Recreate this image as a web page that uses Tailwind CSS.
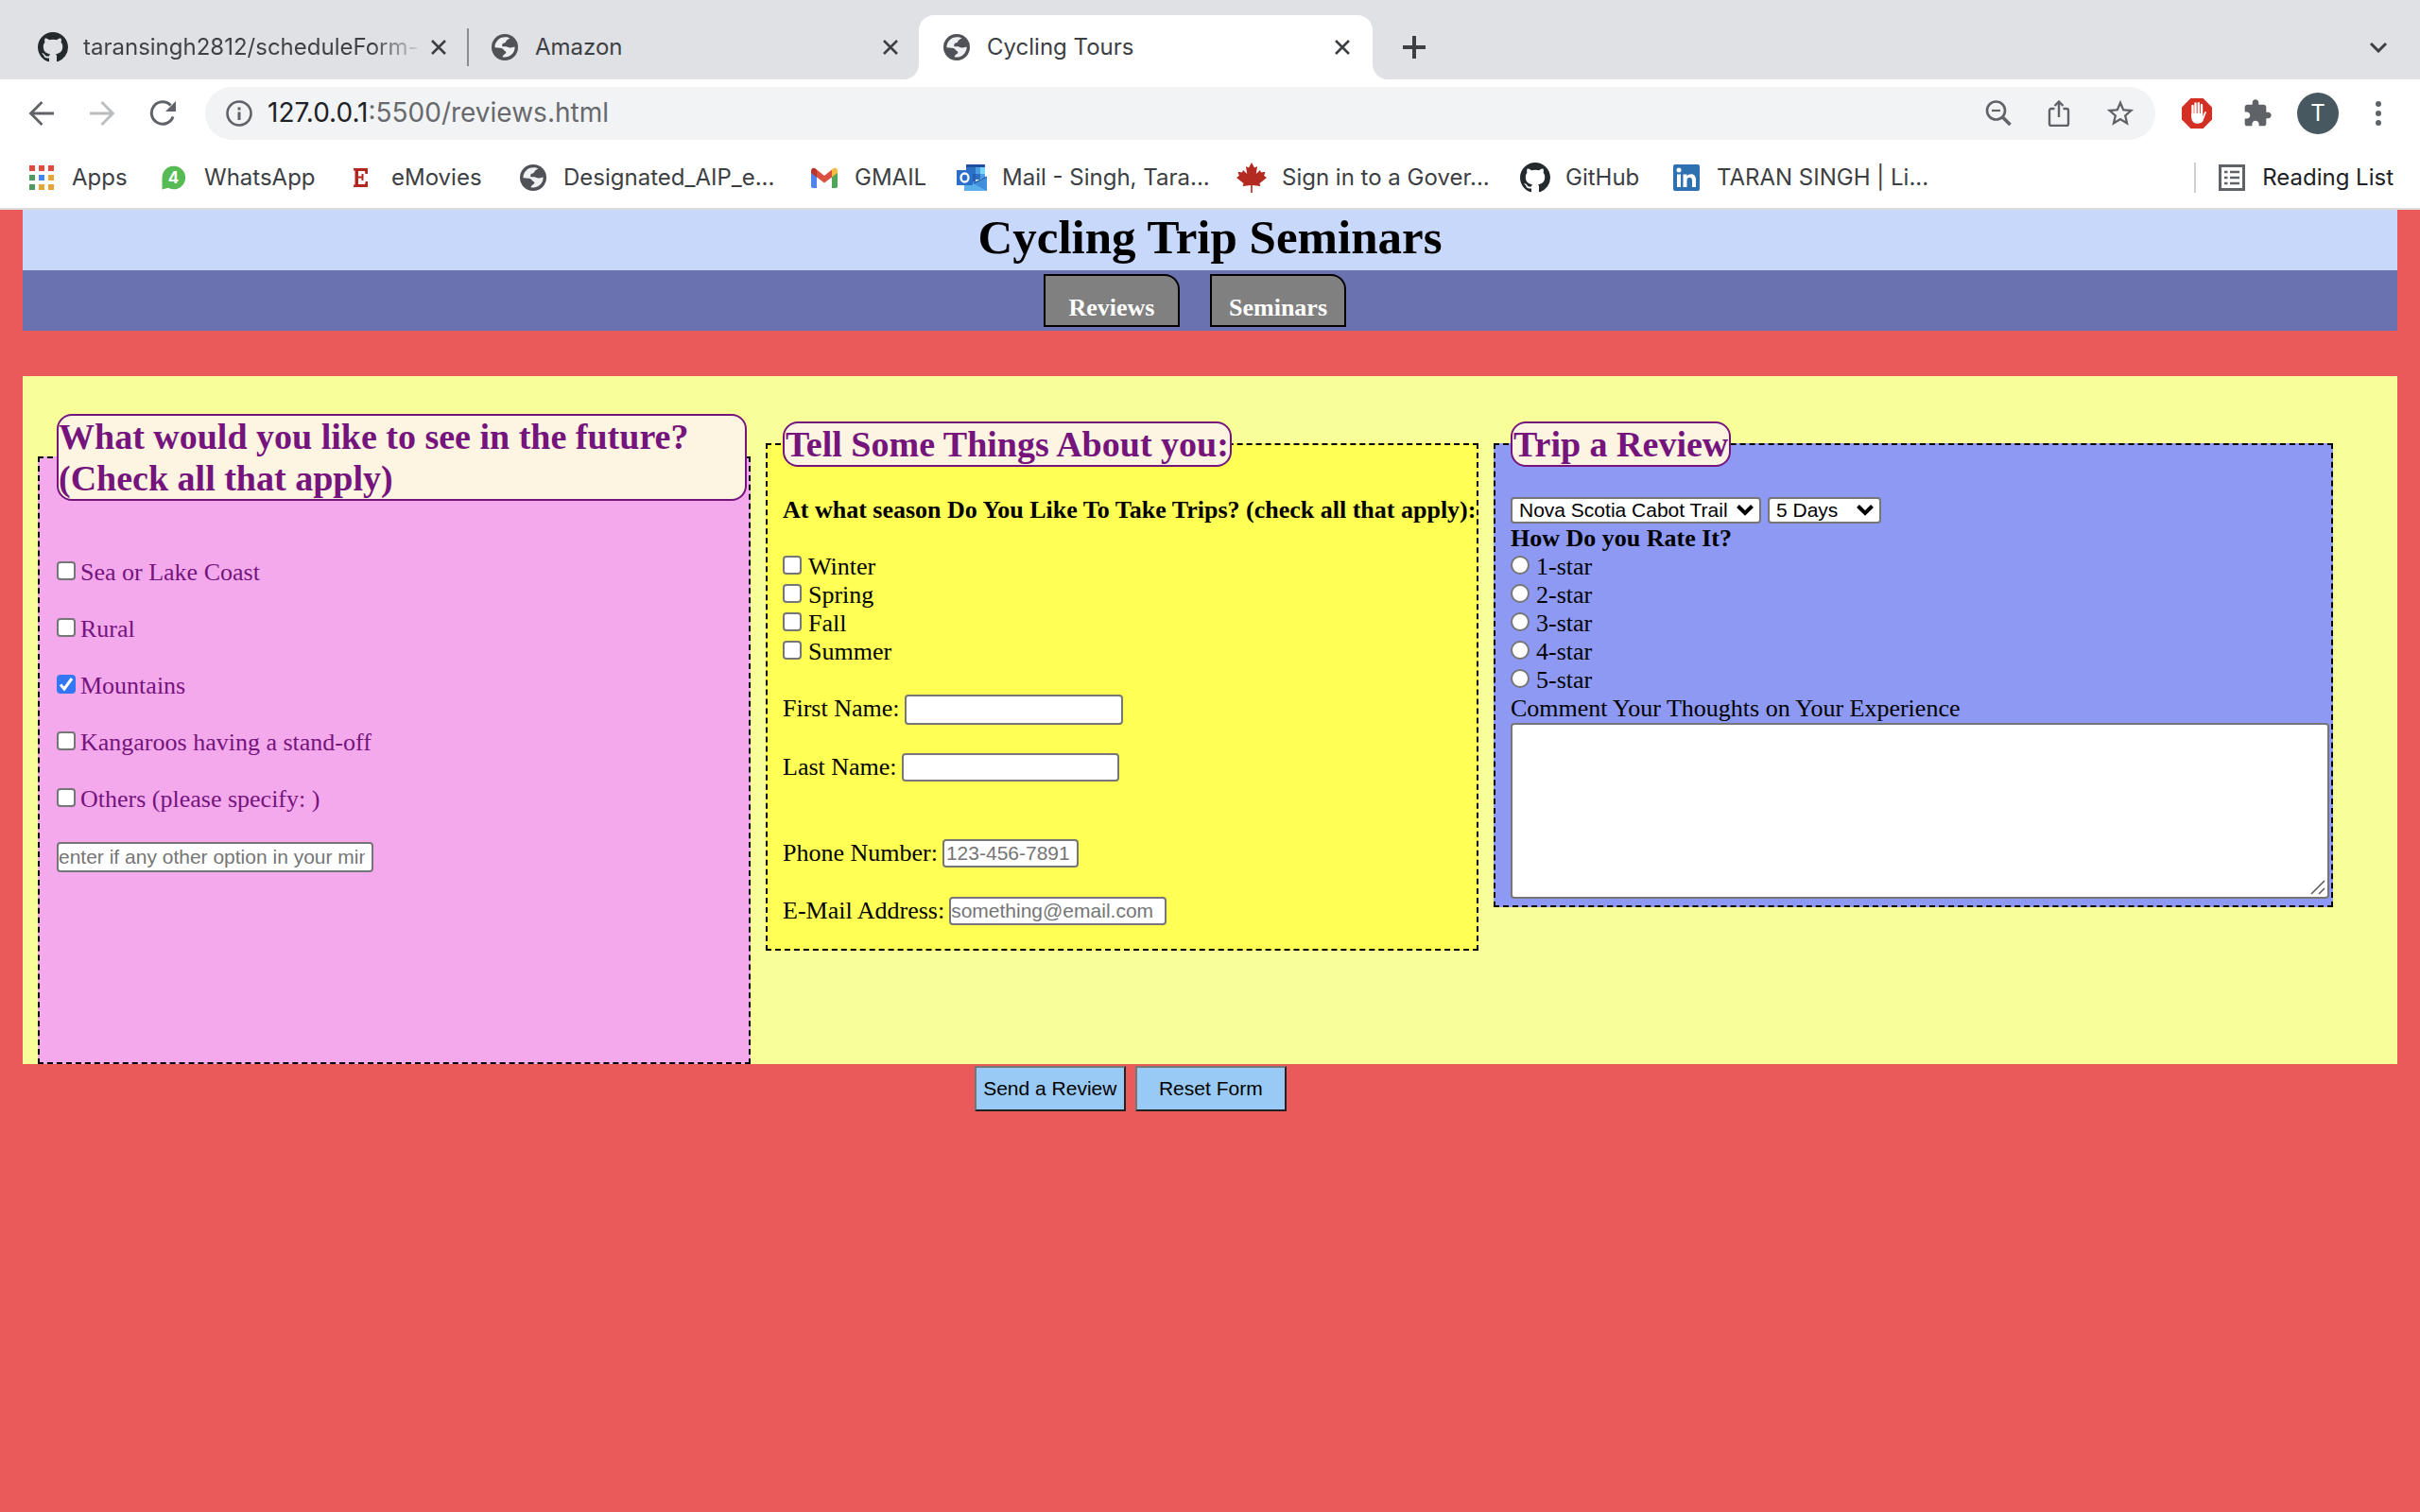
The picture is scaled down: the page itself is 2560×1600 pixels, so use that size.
<!DOCTYPE html>
<html lang="en">
<head>
<meta charset="utf-8">
<title>Cycling Tours</title>
<script src="https://cdn.jsdelivr.net/npm/@tailwindcss/browser@4"></script>
</head>
<body class="min-h-screen bg-[#eb5a5a] text-black">

<svg class="hidden" aria-hidden="true">
  <symbol id="github" viewBox="0 0 16 16"><path fill="#24292e" d="M8 0C3.58 0 0 3.58 0 8c0 3.54 2.29 6.53 5.47 7.59.4.07.55-.17.55-.38 0-.19-.01-.82-.01-1.49-2.01.37-2.53-.49-2.69-.94-.09-.23-.48-.94-.82-1.13-.28-.15-.68-.52-.01-.53.63-.01 1.08.58 1.23.82.72 1.21 1.87.87 2.33.66.07-.52.28-.87.51-1.07-1.78-.2-3.64-.89-3.64-3.95 0-.87.31-1.59.82-2.15-.08-.2-.36-1.02.08-2.12 0 0 .67-.21 2.2.82.64-.18 1.32-.27 2-.27s1.36.09 2 .27c1.53-1.04 2.2-.82 2.2-.82.44 1.1.16 1.92.08 2.12.51.56.82 1.27.82 2.15 0 3.07-1.87 3.75-3.65 3.95.29.25.54.73.54 1.48 0 1.07-.01 1.93-.01 2.2 0 .21.15.46.55.38A8.01 8.01 0 0 0 16 8c0-4.42-3.58-8-8-8z"/></symbol>
  <symbol id="globe" viewBox="0 0 28 28"><circle cx="14" cy="14" r="14" fill="#505257"/><path fill="#eef0f2" d="M19.500 4.200C17 3 13 2.600 10 4.100C6 6 3.300 10 3.500 14.200L9 14.800C11 15 12.500 16 13.500 17.500C15 18.500 16 19 15 20.500C13.500 21.500 12 22 11.500 24.300C15 25.200 19.500 24 22.300 20.500C24.300 18 24.800 15.500 24.500 13.500L20.500 14.500C18 15 17 13.500 15.500 13.300L11.500 13.200C10.500 11 12 9.500 14 9.200C15.500 9 15 7 16.500 6.300Z"/></symbol>
  <symbol id="close" viewBox="0 0 18 18"><path d="M2 2l14 14M16 2L2 16" stroke="#3c4043" stroke-width="2.600" fill="none"/></symbol>
</svg>

<header class="bg-white font-[Inter,Roboto,sans-serif] text-2xl text-[#3c4043]">
  <!-- tab strip -->
  <div class="flex h-[84px] bg-[#dfe1e5] pt-4">
    <div class="flex h-[68px] w-[496px] shrink-0 items-center pl-10">
      <svg class="size-8 shrink-0"><use href="#github"/></svg>
      <span class="ml-4 w-[360px] shrink-0 bg-gradient-to-r from-[#3c4043] from-85% to-transparent bg-clip-text whitespace-nowrap text-transparent">taransingh2812/scheduleForm-</span>
      <button aria-label="Close tab" class="ml-[7px]"><svg class="size-[18px]"><use href="#close"/></svg></button>
      <span class="ml-auto h-10 w-0.5 bg-[#8a8d91]"></span>
    </div>
    <div class="flex h-[68px] w-[476px] shrink-0 items-center justify-between pr-[21px] pl-6">
      <span class="flex items-center gap-[18px]"><svg class="size-7"><use href="#globe"/></svg>Amazon</span>
      <button aria-label="Close tab"><svg class="size-[18px]"><use href="#close"/></svg></button>
    </div>
    <div class="relative flex h-[68px] w-[480px] shrink-0 items-center justify-between rounded-t-2xl bg-white pr-[23px] pl-[26px]">
      <svg class="absolute bottom-0 -left-4 size-4" viewBox="0 0 16 16"><path d="M16 0v16H0A16 16 0 0 0 16 0z" fill="#fff"/></svg>
      <svg class="absolute -right-4 bottom-0 size-4" viewBox="0 0 16 16"><path d="M0 0v16h16A16 16 0 0 1 0 0z" fill="#fff"/></svg>
      <span class="flex items-center gap-[18px]"><svg class="size-7"><use href="#globe"/></svg>Cycling Tours</span>
      <button aria-label="Close tab"><svg class="size-[18px]"><use href="#close"/></svg></button>
    </div>
    <button aria-label="New tab" class="ml-8 h-[68px]"><svg class="size-6" viewBox="0 0 24 24"><path d="M12 0v24M0 12h24" stroke="#3c4043" stroke-width="4"/></svg></button>
    <button aria-label="Search tabs" class="mr-[34px] ml-auto h-[68px]"><svg class="h-3 w-5" viewBox="0 0 20 12"><path d="M2 2l8 8 8-8" stroke="#3c4043" stroke-width="3" fill="none"/></svg></button>
  </div>

  <!-- toolbar -->
  <div class="flex h-[72px] items-center pr-[29px] pl-[30px]">
    <button aria-label="Back"><svg class="size-7" viewBox="0 0 28 28"><path d="M27 14H3M14.500 2L2.500 14l12 12" stroke="#5f6368" stroke-width="2.800" fill="none"/></svg></button>
    <button aria-label="Forward" class="ml-9"><svg class="size-7" viewBox="0 0 28 28"><path d="M1 14h24M13.500 2l12 12-12 12" stroke="#babcbe" stroke-width="2.800" fill="none"/></svg></button>
    <button aria-label="Reload" class="ml-9"><svg class="size-7" viewBox="0 0 28 28"><path d="M25 17.500A11.700 11.700 0 1 1 22.500 5.500" stroke="#5f6368" stroke-width="3" fill="none"/><path d="M28 1v11H17z" fill="#5f6368"/></svg></button>
    <div class="ml-[31px] flex h-14 flex-1 items-center rounded-full bg-[#f1f3f5] pr-5 pl-[22px]">
      <svg class="size-7" viewBox="0 0 28 28"><circle cx="14" cy="14" r="12.500" stroke="#5f6368" stroke-width="2.600" fill="none"/><path d="M14 12.500V21M14 7.500v3" stroke="#5f6368" stroke-width="3"/></svg>
      <span class="ml-4 flex-1 text-[28px] text-[#67696c]"><span class="text-[#202124]">127.0.0.1</span>:5500/reviews.html</span>
      <button aria-label="Zoom"><svg class="size-7" viewBox="0 0 28 28"><circle cx="11.500" cy="11" r="9.500" stroke="#5f6368" stroke-width="2.600" fill="none"/><path d="M7 11h9" stroke="#5f6368" stroke-width="2.200"/><path d="M18 17.500l8.500 8.500" stroke="#5f6368" stroke-width="3.600"/></svg></button>
      <button aria-label="Share" class="ml-9"><svg class="size-7" viewBox="0 0 28 28"><path d="M9.500 9H6a2 2 0 0 0-2 2v14a2 2 0 0 0 2 2h16a2 2 0 0 0 2-2V11a2 2 0 0 0-2-2h-3.500M14 18V2M9.500 6L14 1.500 18.500 6" stroke="#5f6368" stroke-width="2.400" fill="none"/></svg></button>
      <button aria-label="Bookmark" class="ml-[34px]"><svg class="size-[34px]" viewBox="0 0 24 24"><path fill="#5f6368" d="M22 9.240l-7.190-.620L12 2 9.190 8.630 2 9.240l5.460 4.730L5.820 21 12 17.270 18.180 21l-1.630-7.030L22 9.240zM12 15.400l-3.760 2.270 1-4.280-3.320-2.880 4.380-.380L12 6.100l1.710 4.040 4.380.380-3.320 2.880 1 4.280L12 15.400z"/></svg></button>
    </div>
    <button aria-label="Ad blocker" class="ml-7"><svg class="size-8" viewBox="0 0 32 32"><path d="M9.400 0h13.200L32 9.400v13.200L22.600 32H9.400L0 22.600V9.400z" fill="#d32f23"/><path d="M11.500 8v12M14.500 5.500V18M17.800 5.200V18M21 7v12" stroke="#fff" stroke-width="2.400" stroke-linecap="round"/><path d="M10.300 16h11.900v3.500l2-5c.8-1.200 2-.5 1.600.7l-3.500 9c-1.500 3-11 4.500-12-3z" fill="#fff"/></svg></button>
    <button aria-label="Extensions" class="ml-8"><svg class="size-8" viewBox="0 0 24 24"><path fill="#5f6368" d="M20.500 11H19V7c0-1.100-.9-2-2-2h-4V3.500C13 2.120 11.880 1 10.500 1S8 2.120 8 3.500V5H4c-1.100 0-1.990.9-1.990 2v3.800H3.500c1.490 0 2.700 1.210 2.700 2.700s-1.210 2.700-2.700 2.700H2V20c0 1.100.9 2 2 2h3.800v-1.500c0-1.490 1.210-2.700 2.700-2.700 1.490 0 2.700 1.210 2.700 2.700V22H17c1.100 0 2-.9 2-2v-4h1.500c1.380 0 2.500-1.120 2.500-2.500S21.880 11 20.500 11z"/></svg></button>
    <button aria-label="Profile" class="ml-[26px] size-11 rounded-full bg-[#475861] text-white">T</button>
    <button aria-label="Menu" class="ml-[27px]"><svg class="h-[26px] w-[30px]" viewBox="0 0 30 26"><g fill="#5f6368"><circle cx="15" cy="3" r="3"/><circle cx="15" cy="13" r="3"/><circle cx="15" cy="23" r="3"/></g></svg></button>
  </div>

  <!-- bookmarks -->
  <nav class="flex h-[66px] items-center border-b-2 border-[#dcdcdc] pr-7 pl-7 whitespace-nowrap">
    <a href="#" class="flex w-[140px] shrink-0 items-center gap-4"><svg class="size-8" viewBox="0 0 32 32"><path fill="#e24a3b" d="M3 3h6v6H3zM13 3h6v6h-6zM23 3h6v6h-6z"/><path fill="#4f9b5d" d="M3 13h6v6H3zM3 23h6v6H3z"/><path fill="#4285f4" d="M13 13h6v6h-6z"/><path fill="#e5a536" d="M23 13h6v6h-6zM13 23h6v6h-6zM23 23h6v6h-6z"/></svg>Apps</a>
    <a href="#" class="flex w-[198px] shrink-0 items-center gap-4"><svg class="size-8" viewBox="0 0 32 32"><path d="M3.500 28.500V16a12.300 12.300 0 1 1 6.500 10.800z" fill="#57bb55"/><text x="15.500" y="22" text-anchor="middle" font-size="17" font-weight="700" fill="#fff" font-family="Inter">4</text></svg>WhatsApp</a>
    <a href="#" class="flex w-[182px] shrink-0 items-center gap-4"><svg class="size-8" viewBox="0 0 32 32"><path d="M8 6h15v6h-2.500l-.7-3H13v5.500h3.500V12h2v7h-2v-2.500H13V23h7l.8-3H23v6H8v-2.500h1.500v-15H8z" fill="#b3261e"/></svg>eMovies</a>
    <a href="#" class="flex w-[308px] shrink-0 items-center gap-4"><svg class="size-8 p-0.5"><use href="#globe"/></svg>Designated_AIP_e...</a>
    <a href="#" class="flex w-[156px] shrink-0 items-center gap-4"><svg class="size-8" viewBox="0 0 32 32"><path d="M2 10l6 4.500V27H4a2 2 0 0 1-2-2z" fill="#4f83f0"/><path d="M30 10l-6 4.500V27h4a2 2 0 0 0 2-2z" fill="#4fa558"/><path d="M24 7.500l1.500-1.300C28 4.800 30 6.500 30 8.500V11l-6 4.500z" fill="#f2bd42"/><path d="M8 7.500L16 14l8-6.500v8L16 21.500 8 15.500z" fill="#d9503f"/><path d="M2 11V8.500c0-2 2-3.700 4.500-2.300L8 7.500v8z" fill="#b8352a"/></svg>GMAIL</a>
    <a href="#" class="flex w-[296px] shrink-0 items-center gap-4"><svg class="size-8" viewBox="0 0 32 32"><path d="M10 2h20v5H10z" fill="#1f4e9e"/><path d="M10 5h10v7H10z" fill="#2c6fc4"/><path d="M20 5h5v7h-5z" fill="#4ba0e4"/><path d="M25 5h5v7h-5z" fill="#79d6f9"/><path d="M10 12h10v8H10z" fill="#2460b0"/><path d="M20 12h5v6h-5z" fill="#2c6fc4"/><path d="M25 12h5v5h-5z" fill="#4ba0e4"/><path d="M8 20h12l12-5v15H8z" fill="#3f8fdb"/><path d="M8 17l24 13H8z" fill="#5aaeea"/><path d="M18 22l14-7" stroke="#1f4e9e" stroke-width="1"/><path d="M0 8h17v16H0z" fill="#2b6fcb"/><ellipse cx="8.500" cy="16" rx="4" ry="4.500" fill="none" stroke="#fff" stroke-width="2.300"/></svg>Mail - Singh, Tara...</a>
    <a href="#" class="flex w-[300px] shrink-0 items-center gap-4"><svg class="size-8" viewBox="0 0 32 32"><path d="M16 0l3 5.500 3-1.500-1.200 8L25 8l1 2.500 4.500-.7-1.300 4.200L32 16l-7.500 6 .8 3-8.500-1V32h-1.600v-8l-8.500 1 .8-3L0 16l2.800-2L1.500 9.800l4.500.7L7 8l4.200 4L10 4l3 1.500z" fill="#b32a20"/></svg>Sign in to a Gover...</a>
    <a href="#" class="flex w-[160px] shrink-0 items-center gap-4"><svg class="size-8"><use href="#github"/></svg>GitHub</a>
    <a href="#" class="flex shrink-0 items-center gap-4"><svg class="size-8" viewBox="0 0 32 32"><rect x="2" y="2" width="28" height="28" rx="2" fill="#2f70b0"/><g fill="#fff"><circle cx="8" cy="8" r="2.500"/><path d="M6 12.500h4V26H6zM12.500 12.500h4v2c2-3.500 9.500-3.500 9.500 3.500v8h-4v-7c0-4.500-5.500-4-5.500 0v7h-4z"/></g></svg>TARAN SINGH | Li...</a>
    <span class="ml-auto h-8 w-0.5 bg-[#cfd1d4]"></span>
    <a href="#" class="ml-6 flex items-center gap-[18px] text-[#202124]"><svg class="size-7" viewBox="0 0 28 28"><rect x="1.500" y="1.500" width="25" height="25" fill="none" stroke="#5f6368" stroke-width="3"/><path d="M6 8h3.500M12 8h10M6 14h3.500M12 14h10M6 20h3.500M12 20h10" stroke="#5f6368" stroke-width="2.600"/></svg>Reading List</a>
  </nav>
</header>

<main class="px-6 font-['Liberation_Serif',serif] text-[26px] leading-[30px]">
  <h1 class="bg-[#c8d8fa] pb-1.5 text-center text-[51px] leading-[58px] font-bold">Cycling Trip Seminars</h1>
  <nav class="flex justify-center bg-[#6a73af] py-1 font-bold text-white">
    <a href="#" class="mr-8 h-14 w-36 rounded-tr-2xl border-2 border-black bg-[#808080] pt-[19px] text-center">Reviews</a>
    <a href="#" class="mr-8 h-14 w-36 rounded-tr-2xl border-2 border-black bg-[#808080] pt-[19px] text-center">Seminars</a>
  </nav>

  <form class="mt-12">
    <div class="flex items-start gap-4 bg-[#f8ff99] pr-[68px] pl-4">
      <fieldset class="mt-10 w-[754px] shrink-0 border-2 border-dashed border-black bg-[#f3a9ec] pr-0.5 pb-[201px] pl-[18px] text-[#75147c]">
        <legend class="w-full rounded-2xl border-2 border-[#75147c] bg-[#fef4e2] text-[38px] leading-[44px] font-bold">What would you like to see in the future? (Check all that apply)</legend>
        <div class="flex flex-col items-start gap-[30px] pt-[61px]">
          <label class="flex gap-[5px]"><input type="checkbox" class="mt-[3px] size-5 appearance-none rounded-sm border-2 border-[#767676] bg-white">Sea or Lake Coast</label>
          <label class="flex gap-[5px]"><input type="checkbox" class="mt-[3px] size-5 appearance-none rounded-sm border-2 border-[#767676] bg-white">Rural</label>
          <label class="relative flex gap-[5px]"><input type="checkbox" checked class="mt-[3px] size-5 appearance-none rounded-sm bg-[#3377f6]"><svg class="pointer-events-none absolute top-[3px] left-0 size-5" viewBox="0 0 20 20"><path d="M4 10.500l4 4.500 8-11" stroke="#fff" stroke-width="3" fill="none"/></svg>Mountains</label>
          <label class="flex gap-[5px]"><input type="checkbox" class="mt-[3px] size-5 appearance-none rounded-sm border-2 border-[#767676] bg-white">Kangaroos having a stand-off</label>
          <label class="flex gap-[5px]"><input type="checkbox" class="mt-[3px] size-5 appearance-none rounded-sm border-2 border-[#767676] bg-white">Others (please specify: )</label>
          <input type="text" aria-label="Other option" placeholder="enter if any other option in your mind" class="h-8 w-[335px] rounded-sm border-2 border-[#767676] bg-white pr-[7px] font-['Liberation_Sans',sans-serif] text-[21px] placeholder:text-[#757575]">
        </div>
      </fieldset>

      <fieldset class="mt-12 w-[754px] shrink-0 border-2 border-dashed border-black bg-[#ffff54] pb-[25px] pl-4">
        <legend class="rounded-2xl border-2 border-[#75147c] bg-[#fef4e2] px-px text-[38px] leading-[44px] font-bold text-[#75147c]">Tell Some Things About you:</legend>
        <div class="flex flex-col items-start pt-[31px]">
          <p class="font-bold whitespace-nowrap">At what season Do You Like To Take Trips? (check all that apply):</p>
          <div class="mt-[30px] flex flex-col">
            <label class="flex gap-[7px]"><input type="checkbox" class="mt-[3px] size-5 appearance-none rounded-sm border-2 border-[#767676] bg-white">Winter</label>
            <label class="flex gap-[7px]"><input type="checkbox" class="mt-[3px] size-5 appearance-none rounded-sm border-2 border-[#767676] bg-white">Spring</label>
            <label class="flex gap-[7px]"><input type="checkbox" class="mt-[3px] size-5 appearance-none rounded-sm border-2 border-[#767676] bg-white">Fall</label>
            <label class="flex gap-[7px]"><input type="checkbox" class="mt-[3px] size-5 appearance-none rounded-sm border-2 border-[#767676] bg-white">Summer</label>
          </div>
          <label class="mt-[30px] flex gap-[5px]">First Name: <input type="text" class="h-8 w-[231px] rounded-sm border-2 border-[#767676] bg-white"></label>
          <label class="mt-[30px] flex gap-[5px]">Last Name: <input type="text" class="h-[30px] w-[230px] rounded-sm border-2 border-[#767676] bg-white"></label>
          <label class="mt-[60px] flex h-8 items-center gap-[5px]">Phone Number: <input type="tel" placeholder="123-456-7891" class="h-[30px] w-[144px] rounded-sm border-2 border-[#767676] bg-white px-0.5 font-['Liberation_Sans',sans-serif] text-[21px] placeholder:text-[#757575]"></label>
          <label class="mt-[30px] flex gap-[5px]">E-Mail Address: <input type="email" placeholder="something@email.com" class="h-[30px] w-[230px] rounded-sm border-2 border-[#767676] bg-white font-['Liberation_Sans',sans-serif] text-[21px] placeholder:text-[#757575]"></label>
        </div>
      </fieldset>

      <fieldset class="mt-12 flex-1 border-2 border-dashed border-black bg-[#8d99f3] pr-0.5 pb-[7px] pl-4">
        <legend class="rounded-2xl border-2 border-[#75147c] bg-[#fef4e2] px-px text-[38px] leading-[44px] font-bold text-[#75147c]">Trip a Review</legend>
        <div class="flex flex-col pt-8">
          <div class="flex gap-[7px] font-['Liberation_Sans',sans-serif] text-[21px]">
            <span class="relative flex"><select aria-label="Trip" class="h-7 w-[265px] appearance-none rounded-sm border-2 border-[#767676] bg-white pl-[7px] leading-6"><option>Nova Scotia Cabot Trail</option></select><svg class="pointer-events-none absolute top-2 right-2 h-3 w-[18px]" viewBox="0 0 18 12"><path d="M1.500 1.500L9 9l7.500-7.500" stroke="#000" stroke-width="4" fill="none"/></svg></span>
            <span class="relative flex"><select aria-label="Length" class="h-7 w-[120px] appearance-none rounded-sm border-2 border-[#767676] bg-white pl-[7px] leading-6"><option>5 Days</option></select><svg class="pointer-events-none absolute top-2 right-2 h-3 w-[18px]" viewBox="0 0 18 12"><path d="M1.500 1.500L9 9l7.500-7.500" stroke="#000" stroke-width="4" fill="none"/></svg></span>
          </div>
          <p class="mt-px font-bold">How Do you Rate It?</p>
          <label class="flex gap-[7px]"><input type="radio" name="rate" class="mt-[3px] size-5 appearance-none rounded-full border-2 border-[#767676] bg-white">1-star</label>
          <label class="flex gap-[7px]"><input type="radio" name="rate" class="mt-[3px] size-5 appearance-none rounded-full border-2 border-[#767676] bg-white">2-star</label>
          <label class="flex gap-[7px]"><input type="radio" name="rate" class="mt-[3px] size-5 appearance-none rounded-full border-2 border-[#767676] bg-white">3-star</label>
          <label class="flex gap-[7px]"><input type="radio" name="rate" class="mt-[3px] size-5 appearance-none rounded-full border-2 border-[#767676] bg-white">4-star</label>
          <label class="flex gap-[7px]"><input type="radio" name="rate" class="mt-[3px] size-5 appearance-none rounded-full border-2 border-[#767676] bg-white">5-star</label>
          <label for="comment">Comment Your Thoughts on Your Experience</label>
          <div class="relative flex">
            <textarea id="comment" class="h-[186px] w-full resize-none rounded-sm border-2 border-[#767676] bg-white"></textarea>
            <svg class="pointer-events-none absolute right-1 bottom-1 size-4" viewBox="0 0 16 16"><path d="M1 15L15 1M9 15l6-6" stroke="#555" stroke-width="1.500"/></svg>
          </div>
        </div>
      </fieldset>
    </div>

    <div class="flex gap-2.5 pt-0.5 pl-[calc(40%+2px)] font-['Liberation_Sans',sans-serif] text-[21px]">
      <button type="submit" class="h-12 w-40 border-2 border-t-[#767676] border-r-[#222] border-b-[#222] border-l-[#767676] bg-[#99caf5]">Send a Review</button>
      <button type="reset" class="h-12 w-40 border-2 border-t-[#767676] border-r-[#222] border-b-[#222] border-l-[#767676] bg-[#99caf5]">Reset Form</button>
    </div>
  </form>
</main>
</body>
</html>
